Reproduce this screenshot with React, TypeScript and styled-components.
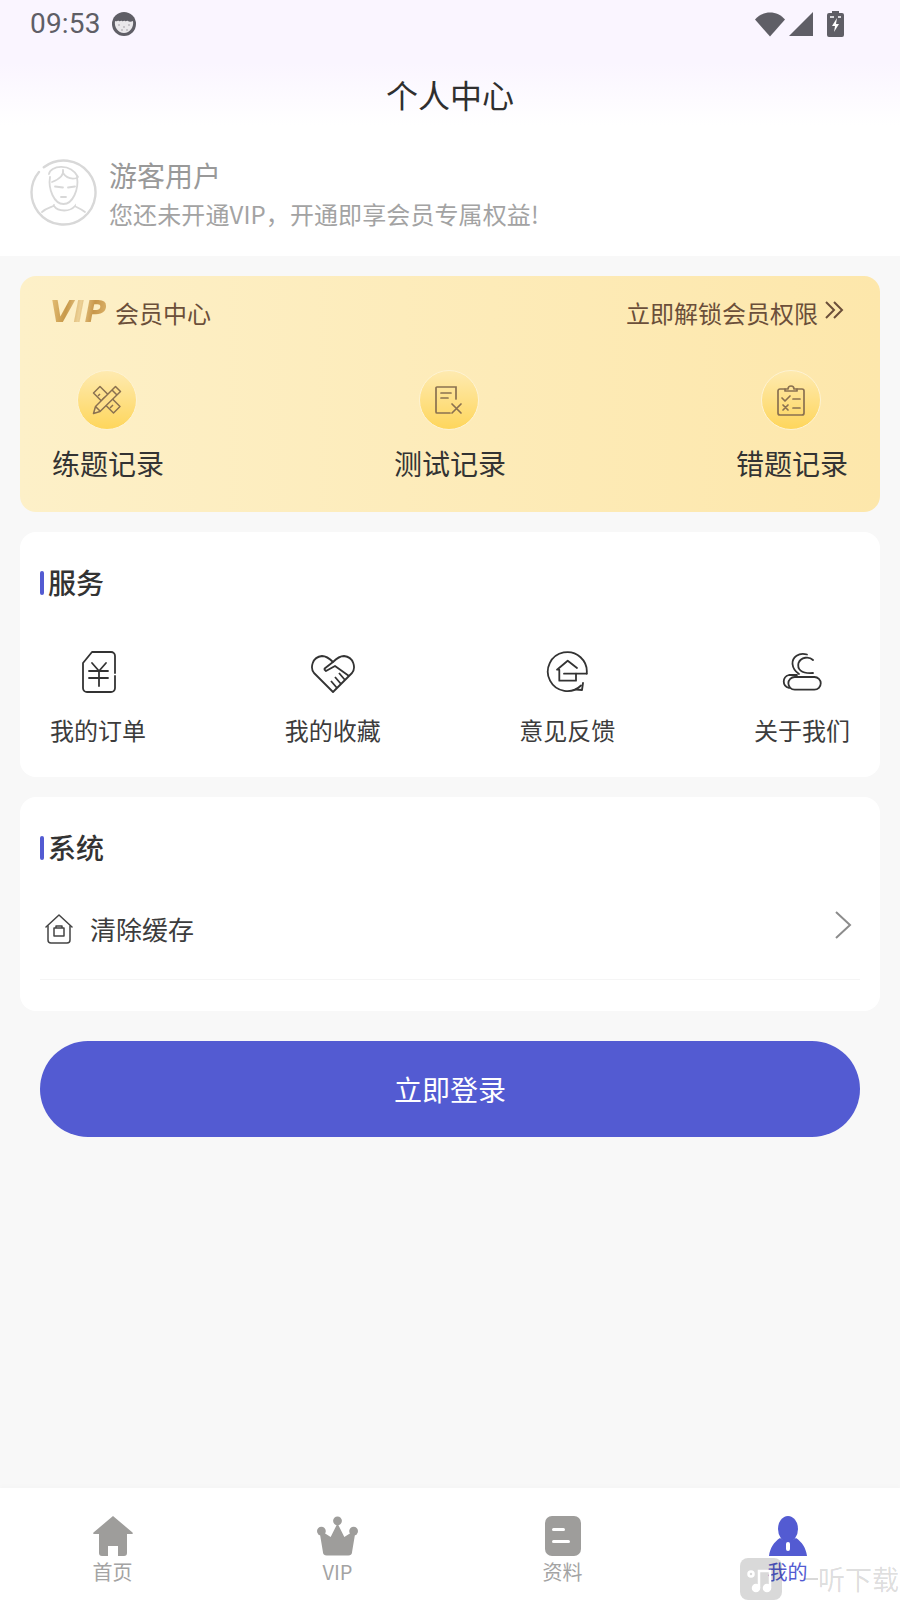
import React from "react";
import styled, { createGlobalStyle } from "styled-components";

const GlobalStyle = createGlobalStyle`
  html, body {
    margin: 0;
    padding: 0;
    background: #f8f8f8;
  }
  * {
    box-sizing: border-box;
  }
`;

const Page = styled.div`
  position: relative;
  width: 900px;
  height: 1600px;
  overflow: hidden;
  display: flex;
  flex-direction: column;
  background: #f8f8f8;
  font-family: "Noto Sans CJK SC", "Noto Sans", sans-serif;
  color: #333;
`;

const Header = styled.header`
  height: 125px;
  background: linear-gradient(180deg, #faf5ff 0%, #faf5ff 50%, #ffffff 100%);
`;

const StatusBar = styled.div`
  height: 48px;
  padding: 0 56px 0 30px;
  display: flex;
  align-items: center;
  justify-content: space-between;
  color: #5f5e66;
`;

const StatusLeft = styled.div`
  display: flex;
  align-items: center;
  gap: 11px;
`;

const Clock = styled.span`
  font-family: Roboto, sans-serif;
  font-size: 28px;
  font-weight: 400;
  letter-spacing: 0.2px;
  line-height: 48px;
`;

const StatusRight = styled.div`
  display: flex;
  align-items: center;
`;

const Title = styled.h1`
  margin: 0;
  height: 77px;
  font-size: 32px;
  font-weight: 400;
  line-height: 92px;
  text-align: center;
  color: #2f2f2f;
`;

const Profile = styled.section`
  height: 131px;
  background: #fff;
  padding: 34px 30px 0;
  display: flex;
  align-items: flex-start;
  gap: 12px;
`;

const ProfileText = styled.div`
  display: flex;
  flex-direction: column;
  margin-top: -2px;
`;

const UserName = styled.div`
  font-size: 28px;
  line-height: 36px;
  color: #999;
`;

const UserHint = styled.div`
  margin-top: 3px;
  font-size: 24px;
  line-height: 36px;
  letter-spacing: 0.1px;
  color: #a3a3a3;
`;

const Main = styled.main`
  padding: 20px 20px 0;
  display: flex;
  flex-direction: column;
  gap: 20px;
`;

const VipCard = styled.section`
  height: 236px;
  padding: 21px 32px 0;
  border-radius: 16px;
  background: linear-gradient(90deg, #fdf0c8 0%, #fdebb8 55%, #fde7ab 100%);
`;

const VipHead = styled.div`
  height: 30px;
  display: flex;
  align-items: center;
  justify-content: space-between;
  font-size: 24px;
  color: #6b4f3a;
`;

const VipBrand = styled.div`
  display: flex;
  align-items: center;
  gap: 9px;
`;

const VipLogo = styled.span`
  width: 56px;
  margin-left: -2px;
  font-family: "DejaVu Sans", sans-serif;
  font-size: 30px;
  font-weight: 700;
  font-style: italic;
  line-height: 30px;
  background: linear-gradient(100deg, #e6c27a 0%, #c8994a 30%, #ecd095 52%, #c8974a 75%, #dcb36a 100%);
  -webkit-background-clip: text;
  background-clip: text;
  color: transparent;
`;

const VipLink = styled.div`
  display: flex;
  align-items: center;
  gap: 6px;
  padding-right: 4px;
`;

const VipRow = styled.div`
  margin-top: 43px;
  display: flex;
  justify-content: space-between;
`;

const VipItem = styled.div`
  width: 112px;
  display: flex;
  flex-direction: column;
  align-items: center;
`;

const VipCircle = styled.div`
  width: 60px;
  height: 60px;
  margin-right: 3px;
  border-radius: 50%;
  border: 1px solid #fef3d2;
  background: linear-gradient(180deg, #feeab0 0%, #fed65c 100%);
  display: flex;
  align-items: center;
  justify-content: center;
`;

const VipLabel = styled.div`
  margin-top: 15px;
  font-size: 28px;
  line-height: 36px;
  color: #333;
  white-space: nowrap;
`;

const Card = styled.section<{ $height: number }>`
  height: ${(p) => p.$height}px;
  padding: 35px 20px 0;
  border-radius: 16px;
  background: #fff;
`;

const SectionTitle = styled.h2`
  margin: 0;
  height: 30px;
  display: flex;
  align-items: center;
  gap: 4px;
  font-size: 28px;
  font-weight: 500;
  line-height: 30px;
  color: #333;

  &::before {
    content: "";
    width: 4px;
    height: 24px;
    margin-top: 2px;
    border-radius: 2px;
    background: #535bd2;
  }
`;

const ServiceRow = styled.div`
  margin-top: 54px;
  padding: 0 10px;
  display: flex;
  justify-content: space-between;
`;

const ServiceItem = styled.div`
  width: 96px;
  display: flex;
  flex-direction: column;
  align-items: center;
  gap: 21px;
`;

const ServiceLabel = styled.div`
  font-size: 24px;
  line-height: 32px;
  color: #3c3c3c;
  white-space: nowrap;
`;

const SettingRow = styled.div`
  margin-top: 38px;
  height: 80px;
  padding: 0 8px 22px 5px;
  display: flex;
  align-items: center;
  border-bottom: 1px solid #f5f5f5;
`;

const SettingLabel = styled.span`
  flex: 1;
  margin-left: 17px;
  font-size: 26px;
  line-height: 56px;
  color: #3c3c3c;
`;

const LoginButton = styled.button`
  height: 96px;
  margin: 10px 20px 0;
  border: 0;
  border-radius: 48px;
  background: #535bd2;
  color: #fff;
  font-family: inherit;
  font-size: 28px;
`;

const TabBar = styled.nav`
  margin-top: auto;
  height: 112px;
  padding-top: 28px;
  display: grid;
  grid-template-columns: repeat(4, 1fr);
  background: #fff;
  box-shadow: 0 -3px 4px rgba(0, 0, 0, 0.012);
`;

const Tab = styled.div<{ $active?: boolean }>`
  display: flex;
  flex-direction: column;
  align-items: center;
  font-size: 20px;
  line-height: 32px;
  color: ${(p) => (p.$active ? "#535bd2" : "#a3a3a3")};
`;

const Watermark = styled.div`
  position: absolute;
  left: 740px;
  top: 1558px;
  width: 160px;
  display: flex;
  align-items: center;
  color: rgba(0, 0, 0, 0.15);
  font-size: 27px;
  line-height: 42px;
  white-space: nowrap;
`;

const WatermarkBadge = styled.div`
  width: 42px;
  height: 42px;
  flex-shrink: 0;
  border-radius: 8px;
  background: rgba(0, 0, 0, 0.15);
  display: flex;
  align-items: center;
  justify-content: center;
`;

const WatermarkDash = styled.span`
  width: 13px;
  height: 2px;
  flex-shrink: 0;
  margin-left: 23px;
  background: rgba(0, 0, 0, 0.15);
`;

const FaceIcon = () => (
  <svg width="24" height="24" viewBox="0 0 24 24">
    <circle cx="12" cy="12" r="12" fill="#5f5e66" />
    <path d="M3 9c2 1 3-1 4 0s2-1 3 0 2-1 3 0 2-1 3 0 3 1 5 0c1 6-3 12-9 12S2 15 3 9z" fill="#e9e7ea" />
    <g fill="#8b8990">
      <circle cx="7" cy="13" r="0.7" />
      <circle cx="12" cy="15" r="0.7" />
      <circle cx="17" cy="13" r="0.7" />
      <circle cx="10" cy="18" r="0.7" />
      <circle cx="15" cy="18" r="0.7" />
    </g>
  </svg>
);

const WifiIcon = () => (
  <svg width="32" height="26" viewBox="0 0 32 26" style={{ marginRight: 3 }}>
    <path d="M16 25.500 1 8.500C5 4 10 1.500 16 1.500S27 4 31 8.500z" fill="#5f5e66" />
  </svg>
);

const SignalIcon = () => (
  <svg width="24" height="24" viewBox="0 0 24 24" style={{ marginRight: 14 }}>
    <path d="M0 24 24 0v24z" fill="#5f5e66" />
  </svg>
);

const BatteryIcon = () => (
  <svg width="17" height="26" viewBox="0 0 17 26">
    <path d="M5 0h7v2h3a2 2 0 0 1 2 2v20a2 2 0 0 1-2 2H2a2 2 0 0 1-2-2V4a2 2 0 0 1 2-2h3z" fill="#5f5e66" />
    <path d="M3 5h4v2H3zM11 5h3v2h-3z" fill="#d9d8dc" />
    <path d="M10 7 5 15h3l-1 6 5-8H9z" fill="#fff" />
  </svg>
);

const AvatarIcon = () => (
  <svg width="67" height="67" viewBox="0 0 67 67" fill="none" stroke="#d8d8d8" strokeWidth="1.800" strokeLinecap="round">
    <circle cx="33.500" cy="33.500" r="32" strokeWidth="2.400" strokeDasharray="194 7" transform="rotate(232 33.500 33.500)" />
    <path d="M19 15C20 7 40 3 48 18" />
    <path d="M22 23C30 20 34 16 33 11M33 14C37 20 43 20 47 19" />
    <path d="M20 18C18 30 24 45 33.500 45 43 45 49 30 47 18" />
    <path d="M25 27.500l8 1M38 28.500l7-1M31 38h5" />
    <path d="M12 53C17 48 24 48 24 46M24 47C28 53 40 53 45 47 45 48 50 49 55 53" />
  </svg>
);

const DoubleChevron = () => (
  <svg width="20" height="20" viewBox="0 0 20 20" fill="none" stroke="#6b4f3a" strokeWidth="2" style={{ marginTop: -5 }}>
    <path d="M2 2l8 8-8 8M10 2l8 8-8 8" />
  </svg>
);

const PencilRuler = () => (
  <svg width="30" height="30" viewBox="0 0 30 30" fill="none" stroke="#8a7150" strokeWidth="1.500" strokeLinejoin="round">
    <path d="M8 1.500 1.500 8l20 20 6.500-6.500z" />
    <path d="M6 11l2-2M10 15l3-3M14 19l2-2M18 23l3-3" />
    <path d="M23.500 1.500 28.500 6.500 8 26.500 1.500 28.500 3.500 21.500z" fill="#fee08a" />
    <path d="M20 5l5 5M3.500 21.500l5 5" />
  </svg>
);

const NoteCross = () => (
  <svg width="30" height="30" viewBox="0 0 30 30" fill="none" stroke="#8a7150" strokeWidth="1.700" strokeLinecap="round">
    <path d="M22 14V2H3a1 1 0 0 0-1 1v24a1 1 0 0 0 1 1h13" />
    <path d="M7 8h10M7 13h7" />
    <path d="M18 19l9 9M27 19l-9 9" />
  </svg>
);

const ClipboardCheck = () => (
  <svg width="28" height="32" viewBox="0 0 28 32" fill="none" stroke="#8a7150" strokeWidth="1.700" strokeLinecap="round" strokeLinejoin="round">
    <path d="M8 5H3a2 2 0 0 0-2 2v22a2 2 0 0 0 2 2h22a2 2 0 0 0 2-2V7a2 2 0 0 0-2-2h-5" />
    <path d="M8 7V5h3a3 3 0 0 1 6 0h3v2z" />
    <path d="M5 14l3 3 5-5M16 15h7M6 21l5 5M11 21l-5 5M16 24h7" />
  </svg>
);

const OrderIcon = () => (
  <svg width="42" height="42" viewBox="0 0 42 42" fill="none" stroke="#333" strokeWidth="1.800" strokeLinecap="round" strokeLinejoin="round">
    <path d="M38 25v12a4 4 0 0 1-4 4H10a4 4 0 0 1-4-4V12L15 1h19a4 4 0 0 1 4 4v17" />
    <path d="M15 12l7 8 7-8M12 20h19M12 27h19M22 20v15" />
  </svg>
);

const HeartIcon = () => (
  <svg width="44" height="42" viewBox="0 0 44 42" fill="none" stroke="#333" strokeWidth="1.800" strokeLinejoin="round">
    <path d="M22 41 3 22C-1 17 1 6 11 5c5 0 8 3 11 6 3-3 6-6 11-6 10 1 12 12 8 17z" />
    <path d="M22 11 13 18M13 18l2 2 9-5 14 10" />
    <path d="M34 29l-6-7M30 33l-6-7M26 37l-6-7" />
  </svg>
);

const FeedbackIcon = () => (
  <svg width="42" height="42" viewBox="0 0 42 42" fill="none" stroke="#333" strokeWidth="1.800" strokeLinecap="round" strokeLinejoin="round">
    <path d="M40.700 22.700A19.500 19.500 0 1 0 35 34.500" />
    <path d="M37 32l-1 7-6-.5" />
    <path d="M31 17 21.700 9.700 11 18.700h2.300v11H30v-7" />
    <path d="M18 22.700h22.700" />
  </svg>
);

const AboutIcon = () => (
  <svg width="42" height="42" viewBox="0 0 42 42" fill="none" stroke="#333" strokeWidth="1.800" strokeLinecap="round">
    <path d="M26 3.500C18 1 11 6 11.500 13 12 18 15 21 18 23" />
    <path d="M32 9C28 5 20 6 17.500 12 16 18 20 23 32 22" />
    <path d="M13.700 26h19.700a6.350 6.350 0 0 1 0 12.700H13.700a6.350 6.350 0 0 1 0-12.700z" />
    <path d="M8 37C1 35 1 26 8 24h8" />
  </svg>
);

const CacheIcon = () => (
  <svg width="28" height="30" viewBox="0 0 28 30" fill="none" stroke="#444" strokeWidth="1.500" strokeLinecap="round" strokeLinejoin="round">
    <path d="M1 13 14 1l13 12" />
    <path d="M3 12v14a3 3 0 0 0 3 3h16a3 3 0 0 0 3-3V12" />
    <path d="M9 14h10v8H9zM11 14v-2h6v2" />
  </svg>
);

const ChevronRight = () => (
  <svg width="18" height="28" viewBox="0 0 18 28" fill="none" stroke="#8c8c8c" strokeWidth="2" style={{ marginTop: -8 }}>
    <path d="M2 1l14 13L2 27" />
  </svg>
);

const HomeTabIcon = () => (
  <svg width="40" height="40" viewBox="0 0 40 40">
    <path
      d="M20 0 39.500 16.500c.8.800.3 1.500-.5 1.500H34v19a3 3 0 0 1-3 3h-6V30h-10v10H9a3 3 0 0 1-3-3V18H1c-.8 0-1.300-.7-.5-1.500z"
      fill="#9e9d9b"
    />
  </svg>
);

const CrownTabIcon = () => (
  <svg width="41" height="40" viewBox="0 0 42 40" fill="#9e9d9b">
    <circle cx="21" cy="4.500" r="4.500" />
    <circle cx="4.500" cy="15" r="4.500" />
    <circle cx="37.500" cy="15" r="4.500" />
    <path d="M21 7l7 14 8-5 3 2-3 18a4 4 0 0 1-4 4H10a4 4 0 0 1-4-4L3 18l3-2 8 5z" />
  </svg>
);

const DocTabIcon = () => (
  <svg width="36" height="40" viewBox="0 0 36 40">
    <rect width="36" height="40" rx="7" fill="#9e9d9b" />
    <rect x="7" y="12" width="13" height="3" rx="1.500" fill="#fff" />
    <rect x="7" y="24" width="18" height="3" rx="1.500" fill="#fff" />
  </svg>
);

const PersonTabIcon = () => (
  <svg width="40" height="40" viewBox="0 0 40 40">
    <ellipse cx="20" cy="13" rx="10" ry="13" fill="#535bd2" />
    <path d="M12 22c3 3 13 3 16 0 6 4 10 10 11 18H1c1-8 5-14 11-18z" fill="#535bd2" />
    <rect x="18" y="26" width="4" height="9" rx="2" fill="#fff" />
  </svg>
);

const NoteBadgeIcon = () => (
  <svg width="30" height="30" viewBox="0 0 30 30" fill="none" stroke="#fff" strokeWidth="2.500">
    <path d="M13 24V7h11v17" />
    <circle cx="10" cy="24" r="3" fill="#fff" />
    <circle cx="21" cy="24" r="3" fill="#fff" />
    <circle cx="5" cy="10" r="2.500" />
  </svg>
);

const records = [
  { label: "练题记录", icon: <PencilRuler /> },
  { label: "测试记录", icon: <NoteCross /> },
  { label: "错题记录", icon: <ClipboardCheck /> },
];

const services = [
  { label: "我的订单", icon: <OrderIcon /> },
  { label: "我的收藏", icon: <HeartIcon /> },
  { label: "意见反馈", icon: <FeedbackIcon /> },
  { label: "关于我们", icon: <AboutIcon /> },
];

export default function App() {
  return (
    <>
      <GlobalStyle />
      <Page>
        <Header>
          <StatusBar>
            <StatusLeft>
              <Clock>09:53</Clock>
              <FaceIcon />
            </StatusLeft>
            <StatusRight>
              <WifiIcon />
              <SignalIcon />
              <BatteryIcon />
            </StatusRight>
          </StatusBar>
          <Title>个人中心</Title>
        </Header>

        <Profile>
          <AvatarIcon />
          <ProfileText>
            <UserName>游客用户</UserName>
            <UserHint>您还未开通VIP，开通即享会员专属权益!</UserHint>
          </ProfileText>
        </Profile>

        <Main>
          <VipCard>
            <VipHead>
              <VipBrand>
                <VipLogo>VIP</VipLogo>
                <span>会员中心</span>
              </VipBrand>
              <VipLink>
                <span>立即解锁会员权限</span>
                <DoubleChevron />
              </VipLink>
            </VipHead>
            <VipRow>
              {records.map((r) => (
                <VipItem key={r.label}>
                  <VipCircle>{r.icon}</VipCircle>
                  <VipLabel>{r.label}</VipLabel>
                </VipItem>
              ))}
            </VipRow>
          </VipCard>

          <Card $height={245}>
            <SectionTitle>服务</SectionTitle>
            <ServiceRow>
              {services.map((s) => (
                <ServiceItem key={s.label}>
                  {s.icon}
                  <ServiceLabel>{s.label}</ServiceLabel>
                </ServiceItem>
              ))}
            </ServiceRow>
          </Card>

          <Card $height={214}>
            <SectionTitle>系统</SectionTitle>
            <SettingRow>
              <CacheIcon />
              <SettingLabel>清除缓存</SettingLabel>
              <ChevronRight />
            </SettingRow>
          </Card>

          <LoginButton>立即登录</LoginButton>
        </Main>

        <TabBar>
          <Tab>
            <HomeTabIcon />
            首页
          </Tab>
          <Tab>
            <CrownTabIcon />
            VIP
          </Tab>
          <Tab>
            <DocTabIcon />
            资料
          </Tab>
          <Tab $active>
            <PersonTabIcon />
            我的
          </Tab>
        </TabBar>

        <Watermark>
          <WatermarkBadge>
            <NoteBadgeIcon />
          </WatermarkBadge>
          <WatermarkDash />
          听下载
        </Watermark>
      </Page>
    </>
  );
}
